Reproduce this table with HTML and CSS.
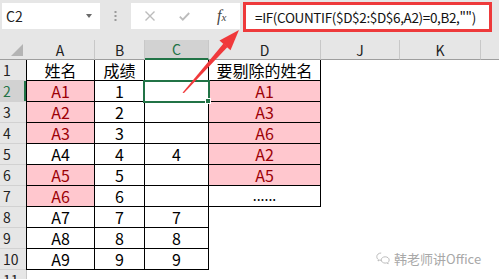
FILE: index.html
```html
<!DOCTYPE html>
<html lang="zh">
<head>
<meta charset="utf-8">
<title>Excel</title>
<link rel="stylesheet" href="styles.css">
</head>
<body>
<div class="fbar">
  <div class="namebox"><span>C2</span><span class="dd"></span></div>
  <div class="grip"><svg width="3" height="10" viewBox="0 0 3 10"><rect x="0.5" y="0" width="2" height="2" fill="#9a9a9a"/><rect x="0.5" y="4" width="2" height="2" fill="#9a9a9a"/><rect x="0.5" y="8" width="2" height="2" fill="#9a9a9a"/></svg></div>
  <div class="fxbox">
    <svg class="ic-x" width="10" height="10" viewBox="0 0 10 10"><path d="M0.5 0.5L9.5 9.5M9.5 0.5L0.5 9.5" stroke="#bcbcbc" stroke-width="1.4" fill="none"/></svg>
    <svg class="ic-ok" width="11" height="9" viewBox="0 0 11 9"><path d="M0.8 4.6L3.8 7.6L10.2 1" stroke="#bcbcbc" stroke-width="1.8" fill="none"/></svg>
    <span class="fx">f<span class="fxx">x</span></span>
  </div>
  <div class="formula">=IF(COUNTIF($D$2:$D$6,A2)=0,B2,"")</div>
</div>

<div class="sheet">
  <div class="h corner"></div>
  <div class="h">A</div>
  <div class="h">B</div>
  <div class="h hsel">C</div>
  <div class="h">D</div>
  <div class="h">J</div>
  <div class="h">K</div>
  <div class="h hlast"></div>

  <div class="rh">1</div>
  <div class="c b a">姓名</div>
  <div class="c b">成绩</div>
  <div class="c b"></div>
  <div class="c b">要剔除的姓名</div>
  <div class="c"></div><div class="c"></div><div class="c"></div>

  <div class="rh rsel">2</div>
  <div class="c b a p">A1</div>
  <div class="c b">1</div>
  <div class="c b selcell"><div class="sel"></div><div class="handle"></div></div>
  <div class="c b p">A1</div>
  <div class="c"></div><div class="c"></div><div class="c"></div>

  <div class="rh">3</div>
  <div class="c b a p">A2</div>
  <div class="c b">2</div>
  <div class="c b"></div>
  <div class="c b p">A3</div>
  <div class="c"></div><div class="c"></div><div class="c"></div>

  <div class="rh">4</div>
  <div class="c b a p">A3</div>
  <div class="c b">3</div>
  <div class="c b"></div>
  <div class="c b p">A6</div>
  <div class="c"></div><div class="c"></div><div class="c"></div>

  <div class="rh">5</div>
  <div class="c b a">A4</div>
  <div class="c b">4</div>
  <div class="c b">4</div>
  <div class="c b p">A2</div>
  <div class="c"></div><div class="c"></div><div class="c"></div>

  <div class="rh">6</div>
  <div class="c b a p">A5</div>
  <div class="c b">5</div>
  <div class="c b"></div>
  <div class="c b p">A5</div>
  <div class="c"></div><div class="c"></div><div class="c"></div>

  <div class="rh">7</div>
  <div class="c b a p">A6</div>
  <div class="c b">6</div>
  <div class="c b"></div>
  <div class="c b dots">......</div>
  <div class="c"></div><div class="c"></div><div class="c"></div>

  <div class="rh">8</div>
  <div class="c b a">A7</div>
  <div class="c b">7</div>
  <div class="c b">7</div>
  <div class="c"></div><div class="c"></div><div class="c"></div><div class="c"></div>

  <div class="rh">9</div>
  <div class="c b a">A8</div>
  <div class="c b">8</div>
  <div class="c b">8</div>
  <div class="c"></div><div class="c"></div><div class="c"></div><div class="c"></div>

  <div class="rh">10</div>
  <div class="c b a">A9</div>
  <div class="c b">9</div>
  <div class="c b">9</div>
  <div class="c"></div><div class="c"></div><div class="c"></div><div class="c"></div>

  <div class="rh">11</div>
  <div class="c a11"></div>
  <div class="c"></div><div class="c"></div><div class="c"></div><div class="c"></div><div class="c"></div><div class="c"></div>
</div>

<svg class="arrow" width="499" height="279" viewBox="0 0 499 279">
  <polygon points="182.5,92.8 184,93 227.5,47 223.5,43.5" fill="#f0393b"/>
  <polygon points="239,30 219.5,40.5 230.5,50.3" fill="#f0393b"/>
</svg>

<div class="wm">
  <svg width="14" height="13" viewBox="0 0 14 13"><path d="M5.2 1C2.6 1 0.8 2.7 0.8 4.7c0 1.2 0.6 2.2 1.6 2.9L2 9l1.7-0.9c0.5 0.1 1 0.2 1.5 0.2" fill="none" stroke="#b4b4b4" stroke-width="0.9"/><path d="M9.2 4.8c2.2 0 4 1.4 4 3.2c0 1-0.5 1.8-1.3 2.4l0.3 1.3l-1.5-0.8c-0.5 0.1-1 0.2-1.5 0.2c-2.2 0-4-1.4-4-3.2S7 4.8 9.2 4.8z" fill="none" stroke="#b4b4b4" stroke-width="0.9"/></svg>
  <span>韩老师讲Office</span>
</div>
</body>
</html>
```
FILE: styles.css
```css
* { box-sizing: border-box; margin: 0; padding: 0; }
html, body { width: 499px; height: 279px; overflow: hidden; background: #fff; }
body { position: relative; font-family: "Noto Sans CJK SC", "Noto Sans", sans-serif; color: #000; }

.fbar { height: 40px; background: #e6e6e6; display: flex; align-items: flex-start; padding-top: 3px; }
.namebox { margin-left: 2px; width: 98px; height: 26px; background: #fff; display: flex; align-items: center; justify-content: space-between; padding: 0 8px 0 4px; font-size: 14px; color: #222; }
.dd { width: 0; height: 0; border-left: 3.5px solid transparent; border-right: 3.5px solid transparent; border-top: 4px solid #6a6a6a; }
.grip { width: 31px; height: 26px; display: flex; align-items: center; justify-content: center; }
.fxbox { width: 109px; height: 26px; background: #fff; display: flex; align-items: center; padding-left: 14px; }
.ic-ok { margin-left: 24px; }
.fx { margin-left: 27px; font-family: "Liberation Serif", serif; font-style: italic; font-size: 16px; color: #444; line-height: 1; }
.fxx { font-size: 11px; }
.formula { margin-left: 3px; margin-top: -1px; width: 249px; height: 30px; border: 3px solid #ee3a3b; background: #fff; font-size: 13.5px; letter-spacing: -0.35px; line-height: 18px; padding-left: 9px; display: flex; align-items: center; white-space: nowrap; overflow: hidden; color: #111; }

.sheet { display: grid; grid-template-columns: 26px 69px 50px 64px 112px 79px 81px 18px; grid-template-rows: 20px repeat(11, 21px); }
.h { background: #e6e6e6; border-right: 1px solid #c8c8c8; border-bottom: 1px solid #9e9e9e; font-size: 14px; line-height: 16px; color: #222; display: flex; align-items: center; justify-content: center; }
.hlast { border-right: none; }
.corner { position: relative; border-right: none; }
.corner::after { content: ""; position: absolute; right: 3px; bottom: 3px; width: 0; height: 0; border-left: 12px solid transparent; border-bottom: 12px solid #b4b4b4; }
.hsel { background: #d2d2d2; color: #217346; border-bottom: 2px solid #217346; }
.rh { background: #e6e6e6; border-bottom: 1px solid #d2d2d2; font-size: 14px; line-height: 16px; color: #222; padding-left: 3px; display: flex; align-items: center; }
.rsel { background: #d2d2d2; color: #217346; box-shadow: inset -2px 0 0 #217346; }

.c { background: #fff; font-size: 16px; line-height: 18px; display: flex; align-items: center; justify-content: center; white-space: nowrap; }
.b { border-right: 1px solid #000; border-bottom: 1px solid #000; }
.a { border-left: 1px solid #000; }
.a11 { border-left: 1px solid #c8c8c8; }
.p { background: #ffc7ce; color: #9c0006; }
.dots { align-items: flex-end; padding-bottom: 2px; font-size: 14px; }

.selcell { position: relative; }
.sel { position: absolute; left: -2px; top: -1px; width: 67px; height: 23px; border: 2px solid #217346; }
.handle { position: absolute; left: 60px; top: 17px; width: 6px; height: 6px; background: #217346; border: 1px solid #fff; }

.arrow { position: absolute; left: 0; top: 0; pointer-events: none; }
.wm { position: absolute; left: 376px; top: 249px; display: flex; align-items: center; gap: 4px; font-size: 13px; color: #a8a8a8; }
```
